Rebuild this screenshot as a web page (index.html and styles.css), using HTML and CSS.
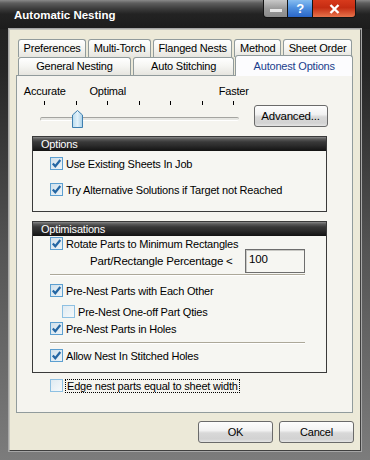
FILE: index.html
```html
<!DOCTYPE html>
<html lang="en">
<head>
  <meta charset="UTF-8" />
  <title>Automatic Nesting</title>
  <link rel="stylesheet" href="styles.css">
</head>
<body>

<div class="window">
  <div class="titlebar">
    <span class="title">Automatic Nesting</span>
    <div class="caption-btns">
      <span class="cap cap-min">
        <svg width="12" height="4" viewBox="0 0 12 4"><rect x="0" y="0" width="12" height="3" fill="#e6e6e6"/></svg>
      </span>
      <span class="cap cap-help">?</span>
      <span class="cap cap-close">
        <svg width="11" height="10" viewBox="0 0 11 10"><path d="M1.5 1 L9.5 9 M9.5 1 L1.5 9" stroke="#fff" stroke-width="2.4"/></svg>
      </span>
    </div>
  </div>

  <div class="client">
    <div class="tabs">
      <div class="tab-row row-back">
        <span class="tab">Preferences</span>
        <span class="tab">Multi-Torch</span>
        <span class="tab">Flanged Nests</span>
        <span class="tab">Method</span>
        <span class="tab">Sheet Order</span>
      </div>
      <div class="tab-row row-front">
        <span class="tab">General Nesting</span>
        <span class="tab">Auto Stitching</span>
        <span class="tab active">Autonest Options</span>
      </div>
    </div>

    <div class="panel">
      <div class="speed">
        <div class="scale">
          <div class="scale-labels">
            <span class="lbl c1">Accurate</span>
            <span class="lbl c3">Optimal</span>
            <span class="lbl c7">Faster</span>
          </div>
          <div class="ticks">
            <span></span><span></span><span></span><span></span><span></span><span></span><span></span>
          </div>
          <div class="track-area">
            <div class="track"></div>
            <svg class="thumb" width="11" height="18" viewBox="0 0 11 18">
              <defs>
                <linearGradient id="tg" x1="0" x2="1" y1="0" y2="0">
                  <stop offset="0" stop-color="#b9dcef"/>
                  <stop offset="0.5" stop-color="#e2f1fa"/>
                  <stop offset="1" stop-color="#a9d0e8"/>
                </linearGradient>
              </defs>
              <path d="M0.5 17.5 L0.5 5 L5.5 0.5 L10.5 5 L10.5 17.5 Z" fill="url(#tg)" stroke="#3f7fb0"/>
            </svg>
          </div>
        </div>
        <button class="btn btn-advanced">Advanced...</button>
      </div>

      <div class="group group-options">
        <div class="group-head">Options</div>
        <div class="group-body">
          <label class="check">
            <span class="box on"><svg width="11" height="11" viewBox="0 0 11 11"><path d="M1.8 5.4 L4.3 8.2 L9.3 2" fill="none" stroke="#2466a3" stroke-width="2.2"/></svg></span>
            <span class="text">Use Existing Sheets In Job</span>
          </label>
          <label class="check">
            <span class="box on"><svg width="11" height="11" viewBox="0 0 11 11"><path d="M1.8 5.4 L4.3 8.2 L9.3 2" fill="none" stroke="#2466a3" stroke-width="2.2"/></svg></span>
            <span class="text">Try Alternative Solutions if Target not Reached</span>
          </label>
        </div>
      </div>

      <div class="group group-optim">
        <div class="group-head">Optimisations</div>
        <div class="group-body">
          <label class="check row-rotate">
            <span class="box on"><svg width="11" height="11" viewBox="0 0 11 11"><path d="M1.8 5.4 L4.3 8.2 L9.3 2" fill="none" stroke="#2466a3" stroke-width="2.2"/></svg></span>
            <span class="text">Rotate Parts to Minimum Rectangles</span>
          </label>
          <div class="percent-row">
            <span class="percent-label">Part/Rectangle Percentage &lt;</span>
            <span class="field">100</span>
          </div>
          <div class="separator sep-1"></div>
          <label class="check row-prenest">
            <span class="box on"><svg width="11" height="11" viewBox="0 0 11 11"><path d="M1.8 5.4 L4.3 8.2 L9.3 2" fill="none" stroke="#2466a3" stroke-width="2.2"/></svg></span>
            <span class="text">Pre-Nest Parts with Each Other</span>
          </label>
          <label class="check row-oneoff">
            <span class="box"></span>
            <span class="text">Pre-Nest One-off Part Qties</span>
          </label>
          <label class="check row-holes">
            <span class="box on"><svg width="11" height="11" viewBox="0 0 11 11"><path d="M1.8 5.4 L4.3 8.2 L9.3 2" fill="none" stroke="#2466a3" stroke-width="2.2"/></svg></span>
            <span class="text">Pre-Nest Parts in Holes</span>
          </label>
          <div class="separator sep-2"></div>
          <label class="check row-stitched">
            <span class="box on"><svg width="11" height="11" viewBox="0 0 11 11"><path d="M1.8 5.4 L4.3 8.2 L9.3 2" fill="none" stroke="#2466a3" stroke-width="2.2"/></svg></span>
            <span class="text">Allow Nest In Stitched Holes</span>
          </label>
        </div>
      </div>

      <label class="check row-edge">
        <span class="box"></span>
        <span class="text focus">Edge nest parts equal to sheet width</span>
      </label>
    </div>

    <div class="dialog-buttons">
      <button class="btn">OK</button>
      <button class="btn">Cancel</button>
    </div>
  </div>
</div>

</body>
</html>
```

FILE: styles.css
```css
* {
  box-sizing: border-box;
}
body {
  margin: 0;
  font-family: "Liberation Sans", Arial, sans-serif;
  font-size: 11px;
  letter-spacing: -0.2px;
  color: #000;
}
.window {
  width: 370px;
  height: 460px;
  display: flex;
  flex-direction: column;
  background: linear-gradient(#1e1e1e 0, #262626 70px, #555 55%, #7c7c7c 100%);
}

/* title bar */
.titlebar {
  height: 29px;
  flex: none;
  display: flex;
  align-items: flex-start;
  background: linear-gradient(#8a8a8a 0, #5e5e5e 3px, #3a3a3a 9px, #232323 14px, #1c1c1c 100%);
}
.title {
  padding: 9px 0 0 14px;
  color: #fff;
  font-weight: bold;
  font-size: 11.5px;
  letter-spacing: 0;
}
.caption-btns {
  margin-left: auto;
  margin-right: 14px;
  display: flex;
  height: 18px;
  border: 1px solid #141414;
  border-top: none;
  border-radius: 0 0 4px 4px;
  overflow: hidden;
}
.cap {
  display: flex;
  align-items: center;
  justify-content: center;
  height: 17px;
}
.cap-min {
  width: 24px;
  padding-top: 5px;
  background: linear-gradient(#c8c8c8, #9a9a9a 50%, #8a8a8a);
  border-right: 1px solid #141414;
}
.cap-help {
  width: 25px;
  color: #fff;
  font-weight: bold;
  font-size: 13px;
  background: linear-gradient(#86bdf0, #4f91e0 45%, #2a66c8);
  border-right: 1px solid #141414;
}
.cap-close {
  width: 42px;
  background: linear-gradient(#d83a1c, #c42c12 45%, #e8744c);
}

/* client area */
.client {
  margin: 0 9px 9px;
  flex: 1;
  display: flex;
  flex-direction: column;
  background: #ece9d8;
  border: 1px solid #3f3f3f;
  border-top-color: #c4c4bc;
  border-left-color: #c4c4bc;
  box-shadow: 0 0 0 1px #a6a6a6;
  padding: 9px 7px 7px 6px;
}

/* tabs */
.tab-row {
  display: flex;
  height: 18px;
  gap: 2px;
}
.row-back {
  margin: 0 1px 0 2px;
}
.row-front {
  margin: 0 0 0 2px;
  position: relative;
  z-index: 2;
}
.tab {
  flex: 1 1 auto;
  height: 18px;
  padding: 0 4px;
  line-height: 16px;
  text-align: center;
  white-space: nowrap;
  border: 1px solid #919b9c;
  border-bottom: none;
  border-radius: 3px 3px 0 0;
  background: linear-gradient(#fff, #f6f6f3 45%, #e6e5df);
}
.tab.active {
  height: 21px;
  margin: -2px 0 -1px -1px;
  padding-top: 2px;
  background: #fcfcfe;
  color: #1a3c8c;
}

/* tab page */
.panel {
  height: 338px;
  flex: none;
  border: 1px solid #919b9c;
  background: #f5f4ef;
  display: flex;
  flex-direction: column;
}

/* speed slider */
.speed {
  display: flex;
  align-items: flex-end;
  padding: 9px 0 0 12px;
}
.scale {
  width: 220.5px;
}
.scale-labels,
.ticks {
  display: grid;
  grid-template-columns: repeat(7, 31.5px);
}
.scale-labels {
  height: 13px;
  line-height: 13px;
}
.lbl {
  justify-self: center;
  white-space: nowrap;
}
.c1 { grid-column: 1; }
.c3 { grid-column: 3; }
.c7 { grid-column: 7; }
.ticks {
  margin-top: 3px;
  height: 5px;
}
.ticks span {
  justify-self: center;
  width: 1px;
  height: 4px;
  background: #000;
}
.track-area {
  position: relative;
  height: 22px;
  padding-top: 11px;
  margin: 0 11px;
}
.track {
  height: 4px;
  border-top: 1px solid #a4a4a0;
  border-bottom: 1px solid #fff;
  border-left: 1px solid #b8b8b4;
  border-radius: 2px;
  background: #e6e6e2;
}
.thumb {
  position: absolute;
  left: 32px;
  top: 4px;
}

/* buttons */
.btn {
  font: inherit;
  letter-spacing: inherit;
  color: #000;
  padding: 0;
  height: 22px;
  width: 75px;
  border: 1px solid #6a6a6a;
  border-radius: 3px;
  background: linear-gradient(#fdfdfd, #f2f2f2 42%, #d8d8d8 55%, #d2d2d2 85%, #e4e4e4);
}
.btn-advanced {
  width: 74px;
  margin: 0 0 1px 4px;
  font-size: 11.5px;
}
.dialog-buttons {
  display: flex;
  justify-content: flex-end;
  gap: 6px;
  margin: 8px -1px 0 0;
}

/* group boxes */
.group {
  width: 295px;
  margin-left: 15px;
  border: 1px solid #3a3a3a;
  background: #f6f6f2;
}
.group-options {
  margin-top: 8px;
}
.group-optim {
  margin-top: 9px;
}
.group-head {
  height: 14px;
  line-height: 14px;
  padding-left: 8px;
  color: #fff;
  background: linear-gradient(#8a8a8a 0, #5a5a5a 2px, #383838 5px, #2c2c2c 60%, #121212 100%);
}
.group-body {
  display: flex;
  flex-direction: column;
  padding-left: 17px;
}
.group-options .group-body {
  padding-top: 6px;
  padding-bottom: 15px;
  gap: 13px;
}
.group-optim .group-body {
  padding-top: 1px;
  padding-bottom: 10px;
}

/* checkboxes */
.check {
  display: flex;
  align-items: center;
  gap: 3px;
  height: 13px;
  white-space: nowrap;
}
.box {
  width: 13px;
  height: 13px;
  flex: none;
  border: 1px solid #8ec0e2;
  background: linear-gradient(135deg, #dfeaf1, #f6f9fb);
}
.box.on {
  border-color: #5c9fd0;
  background: linear-gradient(135deg, #cfe0eb, #eef4f8);
}
.box svg {
  display: block;
}
.row-prenest { margin-top: 8px; }
.row-oneoff { margin: 8px 0 0 12px; }
.row-holes { margin-top: 4px; }
.row-stitched { margin-top: 5px; }

.percent-row {
  display: flex;
  align-items: center;
  height: 24px;
  margin-top: -1px;
  padding-left: 40px;
}
.percent-label {
  width: 155px;
  font-size: 11.5px;
}
.field {
  width: 60px;
  height: 24px;
  padding: 2px 3px;
  line-height: 14px;
  font-size: 11.5px;
  border: 1px solid #6e6e6e;
  box-shadow: inset 1px 1px 0 #c8c8c4;
  background: #f6f6f2;
}

.separator {
  width: 255px;
  height: 2px;
  border-top: 1px solid #aca899;
  border-bottom: 1px solid #fff;
}
.sep-1 { margin-top: 1px; }
.sep-2 { margin-top: 7px; }

.row-edge {
  margin: 6px 0 0 33px;
  gap: 2px;
}
.focus {
  padding: 0 1px;
  line-height: 12px;
  border: 1px dotted #000;
}
```
